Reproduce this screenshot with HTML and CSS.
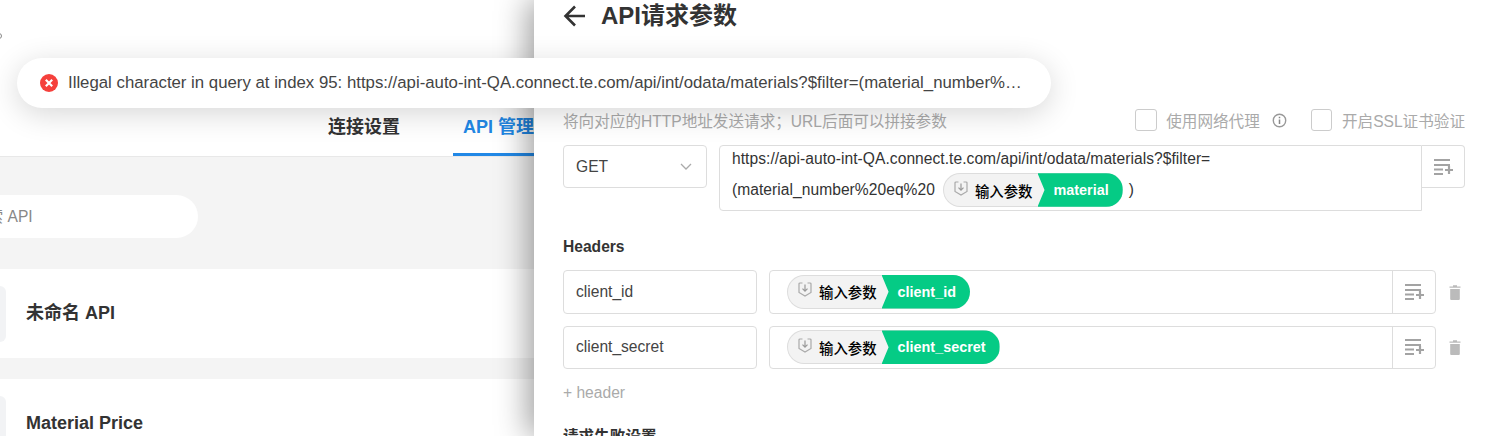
FILE: index.html
```html
<!DOCTYPE html>
<html lang="zh-CN">
<head>
<meta charset="utf-8">
<title>API请求参数</title>
<link rel="stylesheet" href="styles.css">
</head>
<body>
<svg class="defs" width="0" height="0" aria-hidden="true">
  <symbol id="listplus" viewBox="0 0 20 16">
    <path d="M1 1h16M1 6h16M1 10.500h9M1 15h9M12 11h8M16 7v8" fill="none" stroke="#a3a3a3" stroke-width="2.200"/>
  </symbol>
  <symbol id="shield" viewBox="0 0 14 15">
    <path d="M4.500 1H2Q1 1 1 2v8.500L7 14l6-3.500V2q0-1-1-1H9.500" fill="none" stroke="#aaa" stroke-width="1.200"/>
    <path d="M7 2.500v6.500M4.500 6.700 7 9.200l2.500-2.500" fill="none" stroke="#999" stroke-width="1.200"/>
  </symbol>
  <symbol id="trash" viewBox="0 0 12 15">
    <path d="M.5 1.500h11v1.200H.5zM4 .2h4v1.500H4zM1.200 4h9.600v10q0 1-1 1H2.200q-1 0-1-1z" fill="#bbb"/>
  </symbol>
</svg>

<div class="base">
  <div class="top">
    <span class="sliver"></span>
    <nav class="tabs">
      <span class="tab">连接设置</span>
      <span class="tab tab-on">API 管理</span>
    </nav>
  </div>
  <div class="list">
    <div class="search">搜索 API</div>
    <div class="card"><span class="thumb"></span><span class="card-name">未命名 API</span></div>
    <div class="card"><span class="thumb"></span><span class="card-name">Material Price</span></div>
  </div>
</div>

<section class="drawer">
  <header class="dhead">
    <svg class="back" viewBox="0 0 22 22" aria-hidden="true"><path d="M22 11H2.500M12 1.500 2.500 11l9.500 9.500" fill="none" stroke="#333" stroke-width="2.600"/></svg>
    <h1 class="dtitle">API请求参数</h1>
  </header>

  <div class="hint-row">
    <span class="hint">将向对应的HTTP地址发送请求；URL后面可以拼接参数</span>
    <div class="opts">
      <span class="check"></span><span class="opt">使用网络代理</span>
      <svg class="info" viewBox="0 0 14 14" aria-hidden="true"><circle cx="7" cy="7" r="5.800" fill="none" stroke="#999" stroke-width="1.300"/><path d="M7 6v4.200M7 3.600v1.300" stroke="#888" stroke-width="1.400"/></svg>
      <span class="check check-b"></span><span class="opt">开启SSL证书验证</span>
    </div>
  </div>

  <div class="url-row">
    <div class="select">GET
      <svg class="chev" viewBox="0 0 12 7" aria-hidden="true"><path d="M1 1l5 5 5-5" fill="none" stroke="#aaa" stroke-width="1.300"/></svg>
    </div>
    <div class="url">
      <div class="url-line1">https://api-auto-int-QA.connect.te.com/api/int/odata/materials?$filter=</div>
      <div class="url-line2"><span>(material_number%20eq%20</span><span class="chip chip-inline"><span class="chip-l"><svg class="sh"><use href="#shield"/></svg>输入参数</span><span class="chip-r">material</span></span><span class="paren">)</span></div>
    </div>
    <div class="add add-url"><svg class="lp"><use href="#listplus"/></svg></div>
  </div>

  <h2 class="label">Headers</h2>
  <div class="hrow">
    <div class="key">client_id</div>
    <div class="val">
      <div class="val-main"><span class="chip"><span class="chip-l"><svg class="sh"><use href="#shield"/></svg>输入参数</span><span class="chip-r">client_id</span></span></div>
      <div class="add"><svg class="lp"><use href="#listplus"/></svg></div>
    </div>
    <svg class="del"><use href="#trash"/></svg>
  </div>
  <div class="hrow">
    <div class="key">client_secret</div>
    <div class="val">
      <div class="val-main"><span class="chip"><span class="chip-l"><svg class="sh"><use href="#shield"/></svg>输入参数</span><span class="chip-r">client_secret</span></span></div>
      <div class="add"><svg class="lp"><use href="#listplus"/></svg></div>
    </div>
    <svg class="del"><use href="#trash"/></svg>
  </div>
  <div class="more">+ header</div>
  <h2 class="label label-fail">请求失败设置</h2>
</section>

<div class="toast">
  <svg class="err" viewBox="0 0 18 18" aria-hidden="true"><circle cx="9" cy="9" r="9" fill="#f5403c"/><path d="M5.800 5.800l6.400 6.400M12.200 5.800l-6.400 6.400" stroke="#fff" stroke-width="2.200"/></svg>
  <span class="toast-text">Illegal character in query at index 95: https://api-auto-int-QA.connect.te.com/api/int/odata/materials?$filter=(material_number%20eq%20{material})</span>
</div>
</body>
</html>
```

FILE: styles.css
```css
* { box-sizing: border-box; }
html, body { margin: 0; height: 436px; overflow: hidden; background: #fff; }
body { font-family: "Liberation Sans", "Noto Sans CJK SC", sans-serif; color: #333; position: relative; }
.defs { display: block; height: 0; }

.base { width: 534px; height: 436px; overflow: hidden; background: #f4f4f4; }
.top { height: 157px; background: #fff; border-bottom: 1px solid #e8e8e8; display: flex; flex-direction: column; justify-content: flex-end; position: relative; }
.sliver { position: absolute; left: -4px; top: 33px; width: 6px; height: 6px; border: 1px solid #888; border-radius: 50%; }
.tabs { display: flex; justify-content: flex-end; gap: 53px; width: 570px; height: 60px; align-items: flex-start; }
.tab { font-size: 18px; font-weight: 700; color: #333; line-height: 20px; padding-top: 21px; height: 60px; white-space: nowrap; }
.tab-on { color: #2188e6; border-bottom: 3px solid #2188e6; padding: 21px 27px 0 10px; width: 117px; }

.list { padding-top: 38px; }
.search { width: 198px; height: 43px; background: #fff; border-radius: 0 22px 22px 0; font-size: 15.600px; line-height: 43px; color: #888; text-indent: -28px; white-space: nowrap; overflow: hidden; }
.card { height: 89px; background: #fff; margin-top: 31px; display: flex; align-items: center; gap: 20px; }
.card + .card { margin-top: 21px; }
.thumb { width: 6px; height: 56px; background: #f2f3f5; border-radius: 0 7px 7px 0; flex: none; }
.card-name { font-size: 18px; line-height: 24px; font-weight: 700; color: #333; margin-top: -2px; }

.drawer { position: absolute; left: 534px; top: 0; right: 0; bottom: 0; background: #fff; padding: 0 29px; box-shadow: -6px 0 30px rgba(0, 0, 0, .38); overflow: hidden; }
.dhead { display: flex; align-items: center; gap: 16px; height: 32px; }
.back { width: 22px; height: 22px; flex: none; }
.dtitle { margin: 0; font-size: 24px; line-height: 28px; font-weight: 700; color: #333; }

.hint-row { display: flex; justify-content: space-between; align-items: center; margin-top: 77px; height: 22px; }
.hint { font-size: 15.600px; color: #aaa; }
.opts { display: flex; align-items: center; font-size: 15.600px; color: #aaa; }
.check { width: 21.600px; height: 21.600px; border: 1px solid #ccc; border-radius: 3px; }
.check-b { margin-left: 24px; }
.opt { margin-left: 9.600px; }
.info { width: 15px; height: 15px; margin-left: 12px; }

.url-row { display: flex; align-items: flex-start; margin-top: 14px; }
.select { width: 144px; height: 43px; border: 1px solid #ddd; border-radius: 4px; display: flex; justify-content: space-between; align-items: center; padding: 0 14px 0 12px; font-size: 15.600px; color: #444; flex: none; }
.chev { width: 12px; height: 7px; }
.url { width: 703px; height: 66px; margin-left: 12px; border: 1px solid #ddd; border-radius: 4px 0 0 4px; padding: 1px 0 0 12px; font-size: 15.600px; letter-spacing: .04px; color: #333; flex: none; position: relative; z-index: 1; background: #fff; }
.url-line1 { line-height: 24px; white-space: nowrap; }
.url-line2 { display: flex; align-items: center; white-space: nowrap; height: 34px; margin-top: 2px; }
.paren { margin-left: 6px; }
.add { width: 43px; height: 43px; display: flex; align-items: center; justify-content: center; flex: none; }
.add-url { border: 1px solid #ddd; border-left: 0; border-radius: 0 4px 4px 0; }
.lp { width: 20px; height: 16px; }

.label { margin: 26px 0 0; font-size: 15.600px; line-height: 20px; font-weight: 700; color: #333; }
.hrow { display: flex; align-items: center; gap: 12px; margin-top: 13px; height: 43.500px; }
.hrow + .hrow { margin-top: 12px; }
.key { width: 194px; height: 100%; border: 1px solid #ddd; border-radius: 4px; padding-left: 12px; font-size: 15.600px; line-height: 41px; color: #444; flex: none; }
.hrow + .hrow .key { line-height: 40px; }
.val { width: 667px; height: 100%; border: 1px solid #ddd; border-radius: 4px; display: flex; flex: none; }
.val-main { flex: 1; display: flex; align-items: center; padding-left: 17px; }
.val .add { height: 100%; border-left: 1px solid #ddd; }
.del { width: 12px; height: 15px; flex: none; margin: 1px 0 0 1px; }

.chip { display: inline-flex; height: 33.600px; border-radius: 17px; background: #f3f3f3; border: 1px solid #ddd; border-right: 0; font-size: 14.400px; font-weight: 700; color: #000; white-space: nowrap; letter-spacing: 0; }
.chip-l { display: flex; align-items: center; padding-left: 10px; margin-right: -1px; font-weight: 500; }
.sh { width: 14px; height: 15px; margin-right: 7px; margin-top: -4px; }
.chip-r { display: flex; align-items: center; margin: -1px 0 -1px 6px; padding: 0 14px 0 16px; background: #05cb85; color: #fff; border-radius: 0 17px 17px 0; clip-path: polygon(0 0, 100% 0, 100% 100%, 0 100%, 7px 50%); }
.chip-inline { margin-left: 8px; }

.more { margin-top: 14px; font-size: 15.600px; color: #aaa; line-height: 20px; }
.label-fail { margin-top: 24px; }

.toast { position: absolute; left: 17px; top: 58px; width: 1034px; height: 50px; background: #fff; border-radius: 25px; box-shadow: 0 6px 30px rgba(0, 0, 0, .16); display: flex; align-items: center; padding: 0 28px 0 23px; gap: 10px; }
.err { width: 18px; height: 18px; flex: none; }
.toast-text { font-size: 16.800px; color: #444; white-space: nowrap; overflow: hidden; text-overflow: ellipsis; }
```
